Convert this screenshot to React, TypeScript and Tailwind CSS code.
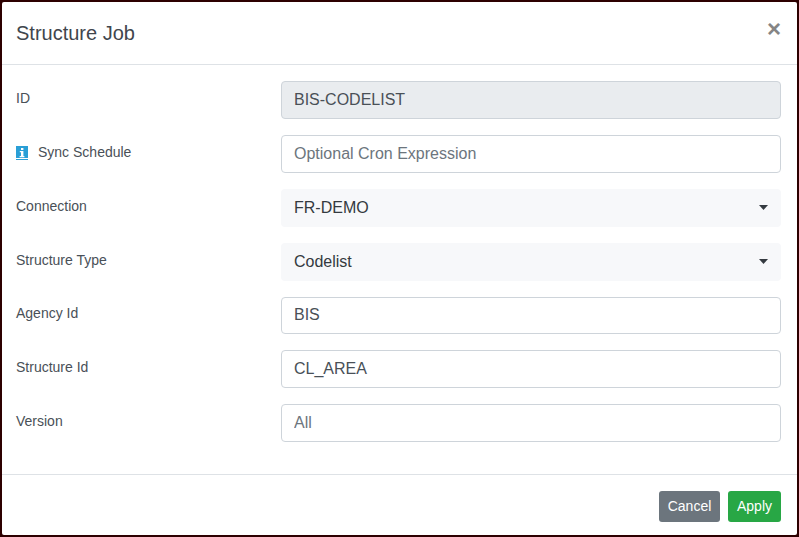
const font = "font-['Liberation_Sans',Arial,sans-serif]";

function InfoIcon() {
  return (
    <svg width="12" height="14" viewBox="0 0 12 14" className="mr-2.5 shrink-0">
      <rect x="0" y="0" width="12" height="12" fill="#2a9fd6" />
      <rect x="0" y="13" width="12" height="1" fill="#2a9fd6" />
      <rect x="5" y="2" width="2.4" height="2" fill="#fff" />
      <path d="M3.8 5h3.6v5h1v1.2H3.6V10h1.4V6.2H3.8z" fill="#fff" />
    </svg>
  );
}

function Caret() {
  return (
    <svg width="9" height="5" viewBox="0 0 9 5" className="absolute right-[13px] top-[16px]">
      <path d="M0 0h9L4.5 5z" fill="#343a40" />
    </svg>
  );
}

function Row({ label, icon, short, children }: { label: string; icon?: boolean; short?: boolean; children: React.ReactNode }) {
  return (
    <div className={short ? "flex h-[37px] items-start" : "flex h-[38px] items-start"}>
      <label className={`flex w-[265px] shrink-0 items-center text-[14px] text-[#495057] ${short ? "h-[33px]" : "h-[35px]"}`}>
        {icon && <InfoIcon />}
        {label}
      </label>
      <div className="relative flex-1">{children}</div>
    </div>
  );
}

const inputClass =
  "block w-full rounded border border-[#ced4da] px-3 text-[16px] text-[#495057] placeholder:text-[#6c757d] outline-none";

export default function App() {
  return (
    <div className={`h-[537px] w-[799px] overflow-hidden bg-[#2d0000] p-[2px] ${font}`}>
      <div className="flex h-full flex-col rounded-[2px] bg-white">
        <div className="flex h-[63px] shrink-0 items-center justify-between border-b border-[#dee2e6] pl-[14px] pr-[16px]">
          <h5 className="text-[20px] text-[#3f464d]">Structure Job</h5>
          <span className="-mt-[8px] text-[24px] font-bold leading-none text-[#858585]">×</span>
        </div>
        <div className="flex flex-1 flex-col gap-[16px] pl-[14px] pr-[16px] pt-[16px]">
          <Row label="ID">
            <input className={`${inputClass} h-[38px] bg-[#e9ecef]`} value="BIS-CODELIST" disabled readOnly />
          </Row>
          <Row label="Sync Schedule" icon>
            <input className={`${inputClass} h-[38px] bg-white`} placeholder="Optional Cron Expression" />
          </Row>
          <Row label="Connection">
            <div className="flex h-[38px] items-center rounded bg-[#f7f8fa] px-[13px] text-[16px] text-[#343a40]">FR-DEMO</div>
            <Caret />
          </Row>
          <Row label="Structure Type">
            <div className="flex h-[38px] items-center rounded bg-[#f7f8fa] px-[13px] text-[16px] text-[#343a40]">Codelist</div>
            <Caret />
          </Row>
          <Row label="Agency Id" short>
            <input className={`${inputClass} h-[37px] bg-white pb-[1px]`} value="BIS" readOnly />
          </Row>
          <Row label="Structure Id">
            <input className={`${inputClass} h-[38px] bg-white`} value="CL_AREA" readOnly />
          </Row>
          <Row label="Version">
            <input className={`${inputClass} h-[38px] bg-white`} placeholder="All" />
          </Row>
        </div>
        <div className="flex h-[61px] shrink-0 items-center justify-end gap-[8px] border-t border-[#dee2e6] pr-[16px] pt-[2px]">
          <button className="h-[31px] w-[61px] rounded-[3px] bg-[#6c757d] text-[14px] text-white">Cancel</button>
          <button className="h-[31px] w-[53px] rounded-[3px] bg-[#28a745] text-[14px] text-white">Apply</button>
        </div>
      </div>
    </div>
  );
}
